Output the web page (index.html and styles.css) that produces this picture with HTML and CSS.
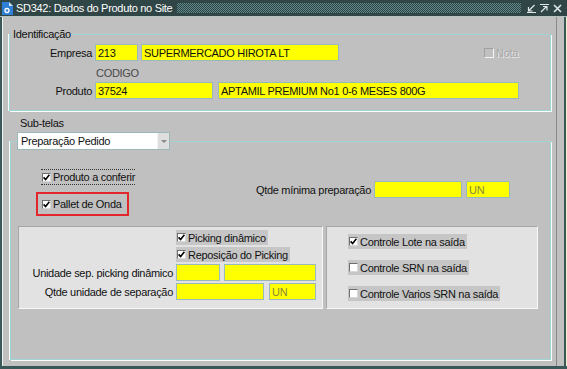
FILE: index.html
```html
<!DOCTYPE html>
<html lang="pt-BR">
  <head>
    <meta charset="UTF-8" />
    <meta name="viewport" content="width=device-width, initial-scale=1.0" />
    <title>SD342: Dados do Produto no Site</title>
    <link rel="stylesheet" href="styles.css">
  </head>
  <body>
    <div class="window">
      <!-- barra de título -->
      <div class="titlebar">
        <svg class="app-icon" width="11" height="13" viewBox="0 0 11 13">
          <path d="M0 0 H7 L11 4 V13 H0 Z" fill="#2f7fd6" />
          <path d="M7 0 V4 H11 Z" fill="#cfe4f8" />
          <circle cx="5" cy="8.5" r="2" fill="none" stroke="#fff" stroke-width="1.3" />
        </svg>
        <span class="title">SD342: Dados do Produto no Site</span>
        <span class="grip"></span>
        <div class="win-buttons">
          <svg width="9" height="9" viewBox="0 0 9 9"><path d="M7.5 1 L2 6.5 M1.5 3 V7 H5.5 M0 8.5 H9" /></svg>
          <svg width="9" height="9" viewBox="0 0 9 9"><path d="M0 0.5 H9 M1 8 L6.5 2.5 M3 2.5 H7 V6.5" /></svg>
          <svg class="close" width="9" height="9" viewBox="0 0 9 9"><path d="M1 1 L8 8 M8 1 L1 8" /></svg>
        </div>
      </div>

      <div class="frame">
        <div class="client">
          <!-- identificação -->
          <fieldset class="group group-ident">
            <legend>Identificação</legend>
            <div class="row">
              <label class="lbl">Empresa</label>
              <input class="fld w43" type="text" value="213" readonly />
              <input class="fld w198 gap3" type="text" value="SUPERMERCADO HIROTA LT" readonly />
              <span class="nota"><span class="chk dis"></span>Nota</span>
            </div>
            <div class="hint">CODIGO</div>
            <div class="row">
              <label class="lbl">Produto</label>
              <input class="fld w118" type="text" value="37524" readonly />
              <input class="fld w301 gap5" type="text" value="APTAMIL PREMIUM No1 0-6 MESES 800G" readonly />
            </div>
          </fieldset>

          <div class="sub-label">Sub-telas</div>

          <!-- sub-telas -->
          <fieldset class="group group-sub">
            <legend>
              <div class="select">Preparação Pedido<span class="arrow"></span></div>
            </legend>

            <div class="upper">
              <div class="checks">
                <span class="chk-item focus">
                  <span class="chk"><svg viewBox="0 0 7 7"><path d="M0.6 3.4 L2.6 5.6 L6.4 0.8" /></svg></span>Produto a conferir
                </span>
                <span class="chk-item marked">
                  <span class="chk"><svg viewBox="0 0 7 7"><path d="M0.6 3.4 L2.6 5.6 L6.4 0.8" /></svg></span>Pallet de Onda
                </span>
              </div>
              <div class="row qtde">
                <label>Qtde mínima preparação</label>
                <input class="fld w88 gap4" type="text" value="" readonly />
                <input class="fld w44 gap4 unit" type="text" value="UN" readonly />
              </div>
            </div>

            <div class="lower">
              <div class="panel panel-left">
                <span class="chk-item shaded col2">
                  <span class="chk"><svg viewBox="0 0 7 7"><path d="M0.6 3.4 L2.6 5.6 L6.4 0.8" /></svg></span>Picking dinâmico
                </span>
                <span class="chk-item shaded col2">
                  <span class="chk"><svg viewBox="0 0 7 7"><path d="M0.6 3.4 L2.6 5.6 L6.4 0.8" /></svg></span>Reposição do Picking
                </span>
                <label class="plbl">Unidade sep. picking dinâmico</label>
                <div class="pfields">
                  <input class="fld w44" type="text" value="" readonly />
                  <input class="fld w92 gap4" type="text" value="" readonly />
                </div>
                <label class="plbl">Qtde unidade de separação</label>
                <div class="pfields">
                  <input class="fld w88" type="text" value="" readonly />
                  <input class="fld w47 gap5 unit" type="text" value="UN" readonly />
                </div>
              </div>
              <div class="panel panel-right">
                <span class="chk-item shaded">
                  <span class="chk"><svg viewBox="0 0 7 7"><path d="M0.6 3.4 L2.6 5.6 L6.4 0.8" /></svg></span>Controle Lote na saída
                </span>
                <span class="chk-item shaded">
                  <span class="chk"></span>Controle SRN na saída
                </span>
                <span class="chk-item shaded">
                  <span class="chk"></span>Controle Varios SRN na saída
                </span>
              </div>
            </div>
          </fieldset>
        </div>
        <div class="side"></div>
      </div>
    </div>
  </body>
</html>
```

FILE: styles.css
```css
/* base */
* {
  box-sizing: border-box;
}
body {
  margin: 0;
  width: 567px;
  height: 369px;
  overflow: hidden;
  background-color: #e8e8e8;
  font-family: "Liberation Sans", Arial, sans-serif;
  font-size: 11px;
  letter-spacing: -0.3px;
  color: #111;
}
.window {
  width: 567px;
  height: 369px;
  display: flex;
  flex-direction: column;
  background-color: #c0c0c0;
}

/* barra de título */
.titlebar {
  height: 17px;
  display: flex;
  align-items: center;
  padding: 0 5px 0 2px;
  background-color: #304646;
  border-bottom: 1px solid #b4c2c2;
  color: #fff;
}
.app-icon {
  flex: none;
}
.title {
  margin-left: 3px;
  white-space: nowrap;
}
.grip {
  flex: 1;
  height: 10px;
  margin: 0 6px 0 5px;
  background-image: repeating-conic-gradient(#5d8787 0 25%, transparent 0 50%);
  background-size: 2px 2px;
}
.win-buttons {
  display: flex;
  gap: 4px;
}
.win-buttons svg {
  fill: none;
  stroke: #dfe8e8;
  stroke-width: 1.2;
}
.win-buttons .close {
  stroke-width: 1.6;
}

/* moldura */
.frame {
  flex: 1;
  display: flex;
  border-left: 2px solid #3a5858;
  border-bottom: 3px solid #3a5858;
}
.client {
  width: 554px;
  display: flex;
  flex-direction: column;
  border-left: 1px solid #eef2f2;
  padding: 0 5px 6px 6px;
}
.side {
  flex: 1;
  border-left: 1px solid #8a8a8a;
  background: linear-gradient(to right, #c0c0c0 0 7px, #3a5858 7px 9px, #f0f0c8 9px);
}

/* grupos */
.group {
  margin: 0;
  min-width: 0;
  border: 1px solid #9fd4d4;
  box-shadow: -1px 0 0 #fbfdfd, 1px 1px 0 #fbfdfd;
}
.group-ident {
  margin-top: 11px;
  padding: 0 0 11px 2px;
}
.group-ident legend {
  padding: 0 1px;
  line-height: 13px;
}
.row {
  display: flex;
  align-items: center;
  height: 17px;
}
.group-ident .row:first-of-type {
  margin-top: 3px;
}
.lbl {
  width: 80px;
  margin-right: 3px;
  text-align: right;
}
.hint {
  margin: 6px 0 2px 84px;
  line-height: 13px;
  color: #484848;
}
.nota {
  display: flex;
  align-items: center;
  margin-left: 145px;
  color: #a6a6a6;
  text-shadow: 1px 1px 0 #ececec;
}

/* campos */
.fld {
  height: 17px;
  margin: 0;
  padding: 0 2px;
  border: 1px solid #9ab9b9;
  background-color: #ffff00;
  font: inherit;
  letter-spacing: inherit;
  color: #111;
  outline: none;
}
.fld.unit {
  color: #8a8a3a;
}
.w43 { width: 43px; }
.w44 { width: 44px; }
.w47 { width: 47px; }
.w88 { width: 88px; }
.w92 { width: 92px; }
.w118 { width: 118px; }
.w198 { width: 198px; }
.w301 { width: 301px; }
.gap3 { margin-left: 3px; }
.gap4 { margin-left: 4px; }
.gap5 { margin-left: 5px; }

/* sub-telas */
.sub-label {
  margin: 6px 0 0 11px;
  line-height: 13px;
}
.group-sub {
  flex: 1;
  margin: 2px 0 0 1px;
  padding: 0 0 0 6px;
}
.group-sub legend {
  padding: 0;
}
.select {
  width: 153px;
  height: 18px;
  display: flex;
  align-items: center;
  padding-left: 3px;
  background-color: #fff;
  border: 1px solid #9cb8b8;
  color: #111;
}
.select .arrow {
  width: 12px;
  height: 16px;
  margin-left: auto;
  background-color: #dedede;
  border-left: 1px solid #f4f4f4;
  position: relative;
}
.select .arrow::after {
  content: "";
  position: absolute;
  left: 3px;
  top: 7px;
  border-left: 3px solid transparent;
  border-right: 3px solid transparent;
  border-top: 3px solid #8a8a8a;
}

/* caixas de seleção */
.chk-item {
  display: inline-flex;
  align-items: center;
  height: 15px;
  white-space: nowrap;
}
.chk {
  flex: none;
  width: 9px;
  height: 9px;
  margin-right: 2px;
  padding: 0;
  background-color: #fff;
  border: 1px solid;
  border-color: #6e6e6e #d8d8d8 #d8d8d8 #6e6e6e;
  display: flex;
}
.chk svg {
  width: 7px;
  height: 7px;
  fill: none;
  stroke: #000;
  stroke-width: 1.6;
}
.chk.dis {
  width: 10px;
  height: 10px;
  background-color: transparent;
  border-color: #a0a0a0 #f4f4f4 #f4f4f4 #a0a0a0;
}

.upper {
  display: flex;
}
.checks {
  display: flex;
  flex-direction: column;
  align-items: flex-start;
  margin-left: 19px;
}
.chk-item.focus {
  height: 16px;
  margin: 19px 0 0 5px;
  padding-left: 1px;
  border-top: 1px dotted #333;
  border-bottom: 1px dotted #333;
}
.chk-item.marked {
  height: 24px;
  margin-top: 7px;
  padding: 0 5px 0 4px;
  border: 2px solid #e3262b;
}
.qtde {
  margin: 31px 40px 0 auto;
}
.qtde .fld:first-of-type {
  margin-left: 3px;
}

/* painéis inferiores */
.lower {
  display: flex;
  gap: 3px;
  margin: 10px 0 0 1px;
}
.panel {
  height: 83px;
  background-color: #e2e2e2;
  border: 1px solid;
  border-color: #a6a6a6 #f8f8f8 #f8f8f8 #a6a6a6;
}
.panel-left {
  width: 305px;
  padding-top: 3px;
  display: grid;
  grid-template-columns: 154px auto;
  column-gap: 3px;
  row-gap: 2px;
  align-content: start;
  align-items: center;
}
.panel-left .col2 {
  grid-column: 2;
  justify-self: start;
}
.plbl {
  text-align: right;
}
.pfields {
  display: flex;
}
.panel-right {
  width: 212px;
  padding: 7px 0 0 21px;
  display: flex;
  flex-direction: column;
  align-items: flex-start;
  gap: 11px;
}
.chk-item.shaded {
  padding: 0 2px 0 1px;
  background-color: #c6c6c6;
}
```
